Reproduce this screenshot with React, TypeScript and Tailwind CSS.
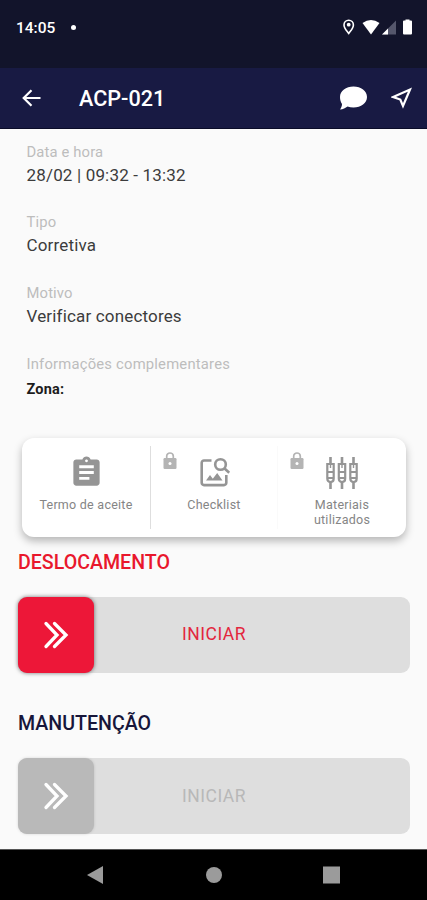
type FieldProps = {
    label: string
    value: string
}

const Field = ({ label, value }: FieldProps) => {
    return (
        <div className="h-[70.7px]">
            <p className="text-[14.8px] leading-5 tracking-[0.14px] text-[#bdbdbd]">{label}</p>
            <p className="mt-[3px] text-[17px] leading-5 tracking-[0.17px] text-[#3c3c3c]">{value}</p>
        </div>
    )
}

const LockIcon = () => (
    <svg className="absolute left-[12px] top-[6px] h-[18px] w-[14px]" viewBox="0 0 14 18" fill="none">
        <rect x="0.5" y="6" width="13" height="11" rx="1.2" fill="#b4b4b4" />
        <path d="M3.7 7V4.3a3.3 3.3 0 0 1 6.6 0V7" stroke="#b4b4b4" strokeWidth="1.7" />
        <circle cx="7" cy="11.5" r="1.5" fill="#fff" />
    </svg>
)

const ClipboardIcon = () => (
    <svg width="35" height="35" viewBox="0 0 24 24" fill="#959595">
        <path d="M19 3h-4.18C14.4 1.84 13.3 1 12 1c-1.3 0-2.4.84-2.82 2H5c-1.1 0-2 .9-2 2v14c0 1.1.9 2 2 2h14c1.1 0 2-.9 2-2V5c0-1.1-.9-2-2-2zm-7 0c.55 0 1 .45 1 1s-.45 1-1 1-1-.45-1-1 .45-1 1-1zm2 14H7v-2h7v2zm3-4H7v-2h10v2zm0-4H7V7h10v2z" />
    </svg>
)

const ImageSearchIcon = () => (
    <svg className="ml-px" width="32" height="32" viewBox="0 0 32 32" fill="none" stroke="#959595" strokeWidth="2.6">
        <path d="M12.5 4.5H5a2.3 2.3 0 0 0-2.3 2.3v20a2.3 2.3 0 0 0 2.3 2.3h20a2.3 2.3 0 0 0 2.3-2.3V19" />
        <circle cx="21.5" cy="8.5" r="5.3" />
        <path d="m25.3 12.3 4.9 4.5" />
        <path d="m7 24.500 4-5.500 2.800 3.700 4.400-5.700 5.300 7.500z" fill="#959595" stroke="none" />
    </svg>
)

const ConnectorsIcon = () => (
    <svg width="34" height="34" viewBox="0 0 34 34" fill="none" stroke="#959595" strokeWidth="2.2">
        {[5.5, 17, 28.5].map((x) => (
            <g key={x} transform={`translate(${x} 0)`}>
                <path d="M0 1v7M0 26v7" strokeWidth="2.6" />
                <path d="M-3.2 8h6.400v14.500q0 3.500-3.200 3.500t-3.200-3.500zM-3.200 16h6.400M-3.200 22h6.400" />
                <path d="M0 8v4" strokeWidth="1.4" />
            </g>
        ))}
    </svg>
)

type SliderProps = {
    title: string
    active?: boolean
}

const Slider = ({ title, active = false }: SliderProps) => {
    return (
        <section className="h-[161.5px] px-[18px]">
            <h2 className={`text-[19.6px] font-medium leading-6 ${active ? "text-[#e9172c]" : "text-[#17163a]"}`}>{title}</h2>
            <div className="mt-[22px] flex h-[76px] w-[392px] items-center rounded-[9px] bg-[#dedede]">
                <div
                    className={`flex h-[76px] w-[76px] items-center justify-center rounded-[9px] ${active ? "bg-[#ed1738] shadow-[0_0_4px_rgba(0,0,0,0.55)]" : "bg-[#b9b9b9] shadow-[0_0_3px_rgba(0,0,0,0.15)]"}`}
                >
                    <svg width="26" height="28" viewBox="0 0 26 28" fill="none" stroke="#fff" strokeWidth="3.3" strokeLinecap="round">
                        <path d="M3 2.5 14 14 3 25.5M11.500 2.500 23 14 11.500 25.500" />
                    </svg>
                </div>
                <span className={`ml-[88px] text-[17.5px] tracking-[0.5px] ${active ? "text-[#e3263d]" : "text-[#b8b8b8]"}`}>INICIAR</span>
            </div>
        </section>
    )
}

const App = () => {
    return (
        <div className="flex h-[900px] w-[427px] flex-col overflow-hidden bg-[#fafafa] font-['Roboto',sans-serif]">
            <div className="flex h-[68px] shrink-0 items-start bg-[#12142b] pl-4 pt-[18px] text-white">
                <span className="w-[55px] text-[15.5px] font-medium leading-5">14:05</span>
                <span className="mt-[7px] h-[5px] w-[5px] rounded-full bg-white" />
                <svg className="ml-auto mr-[14px]" width="72" height="20" viewBox="0 0 72 20" fill="none">
                    <path d="M7.7 15.500C5.500 12.500 3 10 3 6.900a4.700 4.700 0 0 1 9.400 0c0 3.100-2.500 5.600-4.700 8.600z" stroke="#fff" strokeWidth="1.6" />
                    <circle cx="7.7" cy="6.7" r="1.9" fill="#fff" />
                    <path d="M21.500 5Q30 -1 38.500 5L30 16.500z" fill="#fff" />
                    <path d="M55 2.500V16.500H41z" fill="#55576c" />
                    <path d="M47 10.500V16.500H41z" fill="#fff" />
                    <path d="M63 2.500h1.500V1.500h4v1H70q1 0 1 1v12q0 1-1 1h-7q-1 0-1-1v-12q0-1 1-1z" fill="#fff" />
                </svg>
            </div>

            <header className="flex h-[60.5px] shrink-0 items-center border-b border-[#0a0c28] bg-[#181a43] pl-[22px] pr-[14px] text-white">
                <svg className="mt-px" width="19" height="18" viewBox="0 0 19 18" fill="none" stroke="#fff" strokeWidth="2.2">
                    <path d="M18.5 9H2M9.5 1.2 1.7 9l7.8 7.8" />
                </svg>
                <h1 className="ml-[38px] mt-[2px] text-[21.6px] font-medium">ACP-021</h1>
                <svg className="ml-auto" width="29" height="26" viewBox="0 0 29 26" fill="#fff">
                    <path d="M14.5 1.5C22 1.5 28 6 28 12s-6 10.500-13.500 10.500c-2.200 0-4.200-.3-6-1C6.500 23 4 24.500 1 24.500c1.300-1.700 2-3.500 2-5.500C1.700 17 1 14.700 1 12 1 6 7 1.500 14.500 1.500z" />
                </svg>
                <svg className="ml-[23px] mr-px mt-px" width="21" height="22" viewBox="0 0 21 22" fill="none" stroke="#fff" strokeWidth="2.2">
                    <path d="M19 2.500 12 19 9.300 12.500 2.200 10z" />
                </svg>
            </header>

            <main className="flex h-[720.5px] shrink-0 flex-col overflow-hidden">
                <div className="px-[26.5px] pt-[13.2px]">
                    <Field label="Data e hora" value="28/02 | 09:32 - 13:32" />
                    <Field label="Tipo" value="Corretiva" />
                    <Field label="Motivo" value="Verificar conectores" />
                    <div className="h-[84.3px]">
                        <p className="text-[14.8px] leading-5 tracking-[0.2px] text-[#bdbdbd]">Informações complementares</p>
                        <p className="mt-[6.5px] text-[14.5px] font-bold leading-5 tracking-[0.2px] text-[#1c1c1c]">Zona:</p>
                    </div>
                </div>

                <div className="ml-[22px] flex h-[99px] w-[384px] shrink-0 rounded-[12px] bg-white py-2 text-center text-[12.5px] leading-[15px] tracking-[0.25px] text-[#858585] shadow-[0_4px_8px_rgba(0,0,0,0.28)]">
                    <div className="flex w-[129px] flex-col items-center border-r border-[#dedede] pt-[9px]">
                        <ClipboardIcon />
                        <p className="mt-[7px]">Termo de aceite</p>
                    </div>
                    <div className="relative flex w-[127px] flex-col items-center border-r border-[#fafafa] pt-[10px]">
                        <LockIcon />
                        <ImageSearchIcon />
                        <p className="mt-[9px]">Checklist</p>
                    </div>
                    <div className="relative flex w-[128px] flex-col items-center pt-[10px]">
                        <LockIcon />
                        <ConnectorsIcon />
                        <p className="mt-[7px]">Materiais<br />utilizados</p>
                    </div>
                </div>

                <div className="pt-[13.5px]">
                    <Slider title="DESLOCAMENTO" active />
                    <Slider title="MANUTENÇÃO" />
                </div>
            </main>

            <nav className="flex h-[51px] shrink-0 items-center border-t border-[#555] bg-black">
                <svg className="ml-[86px]" width="254" height="20" viewBox="0 0 254 20" fill="#9b9b9b">
                    <path d="M1 10 17 1v18z" />
                    <circle cx="128" cy="10" r="8" />
                    <rect x="237" y="1.5" width="17" height="17" />
                </svg>
            </nav>
        </div>
    )
}

export default App
